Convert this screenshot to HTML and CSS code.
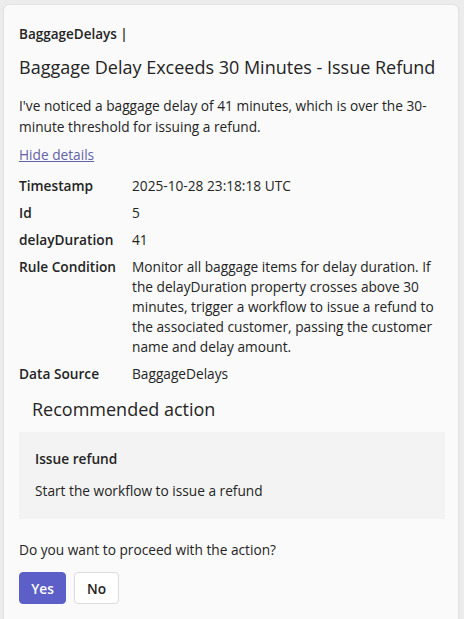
FILE: index.html
```html
<!DOCTYPE html>
<html>
<head>
<meta charset="utf-8">
<link rel="stylesheet" href="styles.css">
</head>
<body>
<div class="card">
  <div class="source">BaggageDelays |</div>
  <div class="title">Baggage Delay Exceeds 30 Minutes - Issue Refund</div>
  <p class="desc">I've noticed a baggage delay of 41 minutes, which is over the 30-minute threshold for issuing a refund.</p>
  <a class="toggle" href="#">Hide details</a>
  <div class="facts">
    <div class="label">Timestamp</div><div class="value">2025-10-28 23:18:18 UTC</div>
    <div class="label">Id</div><div class="value">5</div>
    <div class="label">delayDuration</div><div class="value">41</div>
    <div class="label">Rule Condition</div><div class="value">Monitor all baggage items for delay duration. If the delayDuration property crosses above 30 minutes, trigger a workflow to issue a refund to the associated customer, passing the customer name and delay amount.</div>
    <div class="label">Data Source</div><div class="value">BaggageDelays</div>
  </div>
  <div class="rec-title">Recommended action</div>
  <div class="action-box">
    <div class="action-name">Issue refund</div>
    <div class="action-desc">Start the workflow to issue a refund</div>
  </div>
  <div class="question">Do you want to proceed with the action?</div>
  <div class="buttons">
    <button class="btn primary">Yes</button>
    <button class="btn">No</button>
  </div>
</div>
</body>
</html>
```
FILE: styles.css
```css
html, body {
  margin: 0;
  padding: 0;
  background: #ececec;
  height: 100%;
  overflow: hidden;
}
body {
  font-family: "Open Sans", "Noto Sans", sans-serif;
  color: #242424;
  font-size: 14px;
  padding: 4px 5px 0 3px;
}
.card {
  background: #fafafa;
  border: 1px solid #e3e3e3;
  border-radius: 6px;
  padding: 19px 13px 30px 15px;
  box-shadow: 0 1px 2px rgba(0,0,0,0.06);
  height: 700px;
}
.source {
  font-weight: 600;
  font-size: 13.5px;
  line-height: 20px;
}
.title {
  font-size: 18px;
  font-weight: 500;
  line-height: 24px;
  margin-top: 11px;
}
.desc {
  margin: 16px 0 0;
  line-height: 21px;
  font-size: 13.7px;
}
.toggle {
  display: inline-block;
  margin-top: 8px;
  color: #6264a7;
  line-height: 20px;
  font-size: 13.7px;
}
.facts {
  display: grid;
  grid-template-columns: 113px 1fr;
  row-gap: 7px;
  margin-top: 11px;
  line-height: 20px;
  font-size: 13.7px;
}
.label { font-weight: 600; }
.rec-title {
  font-size: 18px;
  font-weight: 500;
  line-height: 24px;
  margin: 13px 0 0 13px;
}
.action-box {
  background: #f3f3f3;
  margin-top: 11px;
  padding: 17px 16px 18px;
}
.action-name {
  font-weight: 600;
  line-height: 20px;
  font-size: 13.7px;
}
.action-desc {
  margin-top: 12px;
  line-height: 20px;
  font-size: 13.7px;
}
.question {
  margin-top: 21px;
  line-height: 20px;
  font-size: 13.7px;
}
.buttons {
  display: flex;
  gap: 8px;
  margin-top: 12px;
}
.btn {
  font-family: inherit;
  font-size: 13.7px;
  font-weight: 600;
  height: 32px;
  padding: 0 10px;
  min-width: 45px;
  border-radius: 4px;
  border: 1px solid #dcdcdc;
  background: #fff;
  color: #242424;
}
.btn.primary {
  background: #5b5fc7;
  border-color: #5b5fc7;
  color: #fff;
  min-width: 47px;
}
```
